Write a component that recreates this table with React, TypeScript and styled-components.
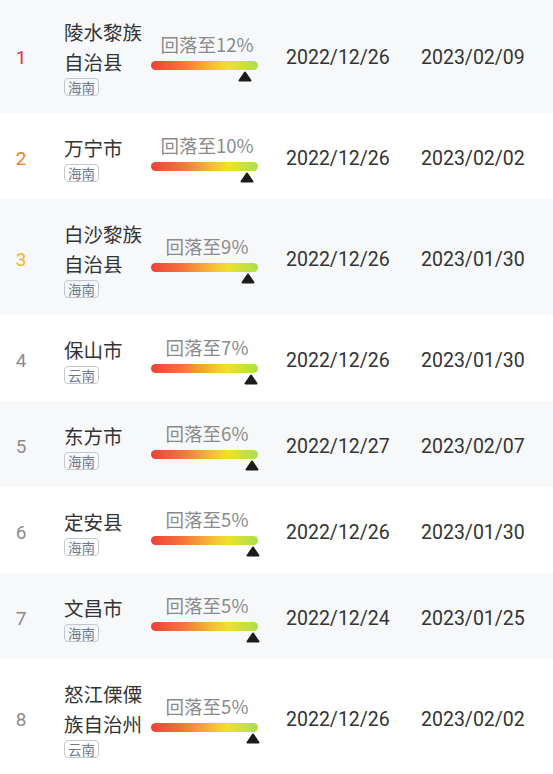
import * as React from "react"
import styled, { createGlobalStyle } from "styled-components"

const GlobalStyle = createGlobalStyle`
  html, body {
    margin: 0;
    padding: 0;
    background: #ffffff;
    overflow: hidden;
  }
  body {
    font-family: "Noto Sans CJK SC", "Noto Sans", sans-serif;
  }
`

const List = styled.ul`
  list-style: none;
  margin: -3px 0 0 0;
  padding: 0;
  width: 553px;
`

const Row = styled.li<{ $shaded: boolean }>`
  display: flex;
  align-items: center;
  padding: 20px 0 17px 0;
  background: ${p => (p.$shaded ? "#f7f8fa" : "#ffffff")};
`

const Rank = styled.div<{ $color: string }>`
  width: 42px;
  flex: none;
  text-align: center;
  font-family: Roboto, "Noto Sans", sans-serif;
  font-size: 19px;
  color: ${p => p.$color};
  padding-top: 2px;
`

const NameCell = styled.div`
  width: 87px;
  flex: none;
  margin-left: 22px;
  display: flex;
  flex-direction: column;
  align-items: flex-start;
`

const Name = styled.div`
  width: 82px;
  font-size: 19.5px;
  line-height: 30px;
  color: #333333;
`

const Tag = styled.span`
  margin-top: 1px;
  height: 18px;
  box-sizing: border-box;
  display: inline-flex;
  align-items: center;
  padding: 0 3px;
  border: 1px solid #c3c7cf;
  border-radius: 4px;
  font-size: 13.5px;
  line-height: 16px;
  color: #6f7890;
  overflow: hidden;
`

const Progress = styled.div`
  width: 135px;
  flex: none;
  display: flex;
  flex-direction: column;
`

const Label = styled.div`
  width: 107px;
  padding-left: 5px;
  box-sizing: border-box;
  text-align: center;
  font-size: 18.5px;
  line-height: 24px;
  color: #8a8a8a;
  white-space: nowrap;
`

const Bar = styled.div`
  margin-top: 5px;
  width: 107px;
  height: 9px;
  border-radius: 5px;
  background: linear-gradient(
    90deg,
    #ef4137 0%,
    #f4763a 30%,
    #f4b834 55%,
    #efe12c 72%,
    #a7e04c 100%
  );
`

const MarkerTrack = styled.div`
  position: relative;
  width: 107px;
  height: 10px;
  margin-top: 1px;
`

const Marker = styled.svg`
  position: absolute;
  top: 0;
  width: 14px;
  height: 11px;
  transform: translateX(-50%);
`

const DateCell = styled.div<{ $width?: number }>`
  ${p => (p.$width ? `width: ${p.$width}px; flex: none;` : "flex: 1;")}
  font-family: Roboto, "Noto Sans", sans-serif;
  font-size: 19.5px;
  color: #333333;
  padding-top: 2px;
`

type Item = {
  name: string
  region: string
  pct: number
  start: string
  end: string
}

const items: Item[] = [
  { name: "陵水黎族自治县", region: "海南", pct: 12, start: "2022/12/26", end: "2023/02/09" },
  { name: "万宁市", region: "海南", pct: 10, start: "2022/12/26", end: "2023/02/02" },
  { name: "白沙黎族自治县", region: "海南", pct: 9, start: "2022/12/26", end: "2023/01/30" },
  { name: "保山市", region: "云南", pct: 7, start: "2022/12/26", end: "2023/01/30" },
  { name: "东方市", region: "海南", pct: 6, start: "2022/12/27", end: "2023/02/07" },
  { name: "定安县", region: "海南", pct: 5, start: "2022/12/26", end: "2023/01/30" },
  { name: "文昌市", region: "海南", pct: 5, start: "2022/12/24", end: "2023/01/25" },
  { name: "怒江傈僳族自治州", region: "云南", pct: 5, start: "2022/12/26", end: "2023/02/02" },
]

const rankColor = (i: number): string => {
  if (i === 0) return "#e0304a"
  if (i === 1) return "#f07a1e"
  if (i === 2) return "#f5b41e"
  return "#8c8c8c"
}

const App: React.FC = () => (
  <>
    <GlobalStyle />
    <List>
      {items.map((item, i) => (
        <Row key={item.name} $shaded={i % 2 === 0}>
          <Rank $color={rankColor(i)}>{i + 1}</Rank>
          <NameCell>
            <Name>{item.name}</Name>
            <Tag>{item.region}</Tag>
          </NameCell>
          <Progress>
            <Label>回落至{item.pct}%</Label>
            <Bar />
            <MarkerTrack>
              <Marker
                viewBox="0 0 14 11"
                style={{ left: `${(1 - item.pct / 100) * 107}px` }}
              >
                <polygon
                  points="7,1.5 12.5,9.5 1.5,9.5"
                  fill="#1c1c1c"
                  stroke="#1c1c1c"
                  strokeWidth="2"
                  strokeLinejoin="round"
                />
              </Marker>
            </MarkerTrack>
          </Progress>
          <DateCell $width={135}>{item.start}</DateCell>
          <DateCell>{item.end}</DateCell>
        </Row>
      ))}
    </List>
  </>
)

export default App
